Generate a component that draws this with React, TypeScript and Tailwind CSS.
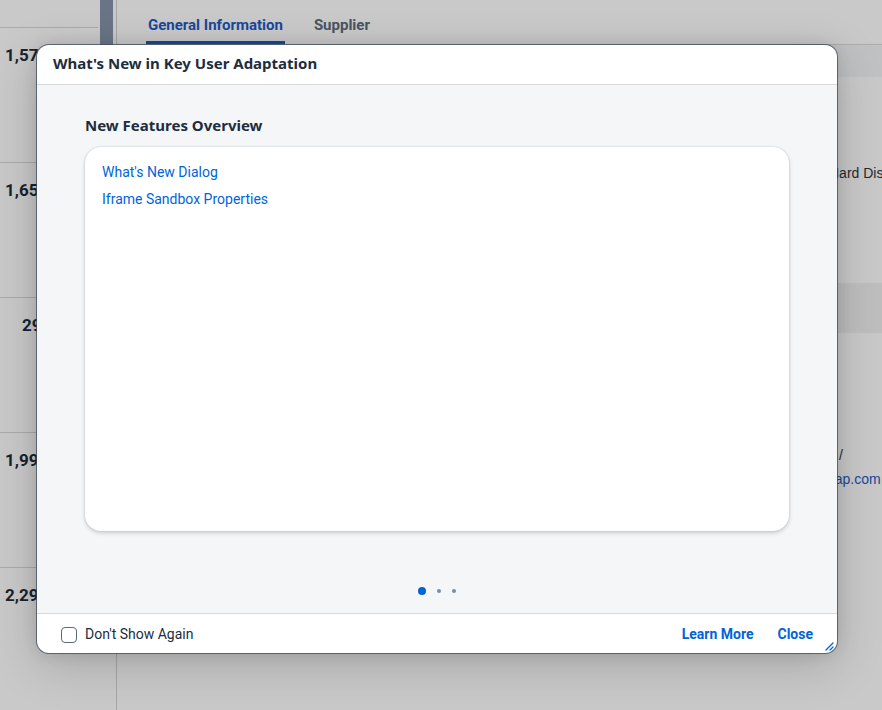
import React from "react";

const rows = [
  { v: "1,574.00", pl: "pl-[5px]" },
  { v: "1,659.00", pl: "pl-[5px]" },
  { v: "299.00", pl: "pl-[22px]" },
  { v: "1,999.00", pl: "pl-[5px]" },
  { v: "2,299.00", pl: "pl-[5px]" },
];

export default function App() {
  return (
    <div className="relative h-[710px] w-[882px] overflow-hidden bg-white font-['Roboto',sans-serif]">
      {/* background page */}
      <div className="flex h-full">
        <div className="flex w-[98px] shrink-0 flex-col pt-[27px]">
          {rows.map((r) => (
            <div
              key={r.v}
              className={`h-[135px] shrink-0 border-t border-[#d9d9d9] pt-[16px] ${r.pl} whitespace-nowrap text-[17px] leading-[22px] font-bold text-[#1d2d3e]`}
            >
              {r.v}
            </div>
          ))}
        </div>
        <div className="ml-[2px] flex w-[17px] shrink-0 border-r border-[#d4d4d6]">
          <div className="h-[320px] w-[13px] bg-[#8695aa]" />
        </div>
        <div className="flex min-w-0 flex-1 flex-col">
          <div className="flex h-[45px] shrink-0 items-end gap-[29px] border-b border-[#dcdcdc] pl-[29px]">
            <div className="border-b-[3px] border-[#1f5bc4] px-[2px] pb-[7px] text-[15px] leading-[18px] font-bold text-[#1f5bc4]">
              General Information
            </div>
            <div className="pb-[10px] text-[15px] leading-[18px] font-bold text-[#5e6a7b]">Supplier</div>
          </div>
          <div className="h-[32px] shrink-0 bg-[#f4f5f6]" />
          <div className="flex h-[206px] shrink-0 flex-col pl-[712px] pt-[86px] font-['Liberation_Sans',sans-serif] text-[14px] text-[#32363a]">
            <span className="whitespace-nowrap">Hard Disk Drive</span>
          </div>
          <div className="h-[50px] shrink-0 bg-[#f1f2f3]" />
          <div className="flex h-[212px] shrink-0 flex-col pl-[674px] pt-[113px] font-['Liberation_Sans',sans-serif] text-[14px] leading-[18px]">
            <span className="ml-[48px] text-[#32363a]">/</span>
            <span className="mt-[6px] whitespace-nowrap text-[#1f5bc4]">info@sap.com</span>
          </div>
          <div className="flex-1 bg-white" />
        </div>
      </div>

      {/* block layer */}
      <div className="absolute inset-0 bg-[rgba(0,0,0,0.21)]" />

      {/* dialog */}
      <div className="absolute left-[37px] top-[45px] flex h-[608px] w-[800px] flex-col overflow-hidden rounded-[12px] bg-white shadow-[0_0_0_1px_rgba(60,75,95,0.75),0_12px_48px_rgba(0,0,0,0.18),0_0_16px_rgba(0,0,0,0.12)]">
        <div className="flex h-[40px] shrink-0 items-center border-b border-[#d9d9d9] pb-[3px] pl-[16px]">
          <span className="font-['Noto_Sans',sans-serif] text-[15px] leading-[20px] font-bold text-[#1d2d3e]">
            What's New in Key User Adaptation
          </span>
        </div>
        <div className="flex flex-1 flex-col bg-[#f5f6f7] px-[48px]">
          <div className="pt-[30px] font-['Noto_Sans',sans-serif] text-[15px] leading-[20px] font-bold text-[#1d2d3e]">
            New Features Overview
          </div>
          <div className="mt-[12px] flex h-[384px] shrink-0 flex-col gap-[8px] rounded-[16px] bg-white px-[17px] pt-[16px] shadow-[0_0_2px_rgba(34,53,72,0.2),0_2px_4px_rgba(34,53,72,0.2)]">
            <a className="text-[14px] leading-[19px] text-[#0064d9]">What's New Dialog</a>
            <a className="text-[14px] leading-[19px] text-[#0064d9]">Iframe Sandbox Properties</a>
          </div>
          <div className="flex flex-1 items-center justify-center gap-[11px] pt-[38px]">
            <span className="h-[8px] w-[8px] rounded-full bg-[#0064d9]" />
            <span className="h-[4px] w-[4px] rounded-full bg-[#788fa6]" />
            <span className="h-[4px] w-[4px] rounded-full bg-[#788fa6]" />
          </div>
        </div>
        <div className="relative flex h-[40px] shrink-0 items-center border-t border-[#d9d9d9] px-[24px] pt-[2px]">
          <span className="h-[16px] w-[16px] rounded-[4px] border border-[#556b81] bg-white" />
          <span className="ml-[8px] text-[14px] text-[#1d2d3e]">Don't Show Again</span>
          <span className="ml-auto text-[14px] font-bold text-[#0064d9]">Learn More</span>
          <span className="ml-[24px] text-[14px] font-bold text-[#0064d9]">Close</span>
          <svg className="absolute bottom-[2px] right-[3px]" width="9" height="9" viewBox="0 0 9 9">
            <path d="M1 8 L8 1 M5 8 L8 5" stroke="#0064d9" strokeWidth="1.3" strokeLinecap="round" />
          </svg>
        </div>
      </div>
    </div>
  );
}
